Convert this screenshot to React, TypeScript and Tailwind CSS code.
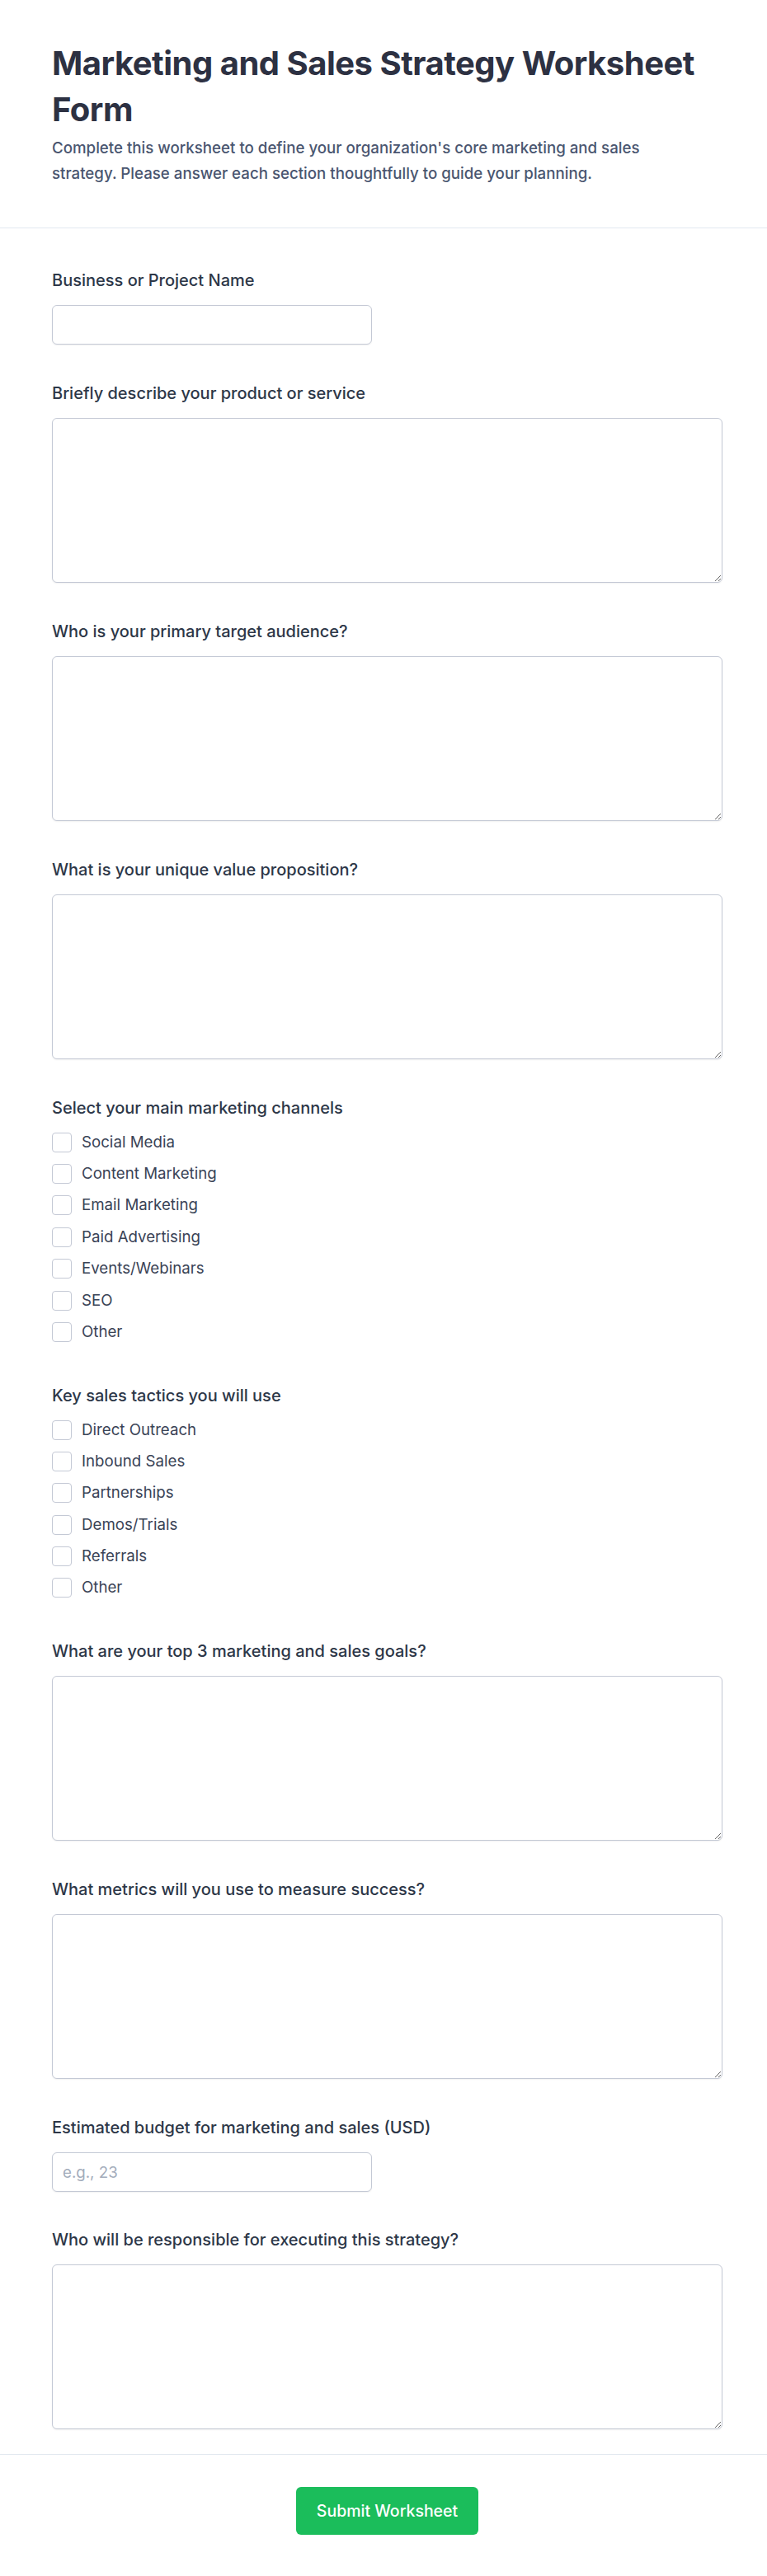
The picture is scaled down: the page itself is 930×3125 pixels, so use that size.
import { useState } from 'react'

type Field =
  | { id: string; label: string; kind: 'input'; placeholder?: string; gap?: string }
  | { id: string; label: string; kind: 'textarea'; gap?: string }
  | { id: string; label: string; kind: 'checks'; options: string[]; gap?: string }

const fields: Field[] = [
  { id: 'name', label: 'Business or Project Name', kind: 'input' },
  { id: 'product', label: 'Briefly describe your product or service', kind: 'textarea' },
  { id: 'audience', label: 'Who is your primary target audience?', kind: 'textarea' },
  { id: 'value', label: 'What is your unique value proposition?', kind: 'textarea' },
  {
    id: 'channels',
    label: 'Select your main marketing channels',
    kind: 'checks',
    options: ['Social Media', 'Content Marketing', 'Email Marketing', 'Paid Advertising', 'Events/Webinars', 'SEO', 'Other'],
  },
  {
    id: 'tactics',
    label: 'Key sales tactics you will use',
    kind: 'checks',
    options: ['Direct Outreach', 'Inbound Sales', 'Partnerships', 'Demos/Trials', 'Referrals', 'Other'],
    gap: 'mt-[51px]',
  },
  { id: 'goals', label: 'What are your top 3 marketing and sales goals?', kind: 'textarea', gap: 'mt-[51px]' },
  { id: 'metrics', label: 'What metrics will you use to measure success?', kind: 'textarea' },
  { id: 'budget', label: 'Estimated budget for marketing and sales (USD)', kind: 'input', placeholder: 'e.g., 23' },
  { id: 'owner', label: 'Who will be responsible for executing this strategy?', kind: 'textarea', gap: 'mt-[46px]' },
]

const boxClass =
  'block w-full rounded-md border border-[#c4c9d5] bg-white px-3 text-[18.7px] text-[#2d3748] shadow-[0_1px_2px_rgba(0,0,0,0.06)] outline-none placeholder:text-[#a3acbb]'

function FieldBlock({ field }: { field: Field }) {
  const [checked, setChecked] = useState<string[]>([])

  const toggle = (option: string) =>
    setChecked((list) => (list.includes(option) ? list.filter((o) => o !== option) : [...list, option]))

  return (
    <div className={field.gap ?? 'mt-[47px] first:mt-0'}>
      <label className="block text-[20px] font-medium leading-6 text-[#2d3748]" htmlFor={field.id}>
        {field.label}
      </label>
      {field.kind === 'input' ? (
        <input className={`${boxClass} mt-[18px] h-12 max-w-[388px]`} id={field.id} placeholder={field.placeholder} type="text" />
      ) : null}
      {field.kind === 'textarea' ? <textarea className={`${boxClass} mt-[18px] h-[200px] py-3`} id={field.id} /> : null}
      {field.kind === 'checks' ? (
        <div className="mt-[15.5px] flex flex-col gap-[10.4px]">
          {field.options.map((option) => (
            <label className="flex h-7 items-center gap-3 text-[18.7px] leading-7 text-[#3a4356]" key={option}>
              <input
                checked={checked.includes(option)}
                className="h-6 w-6 shrink-0 appearance-none rounded-[4px] border border-[#c4c9d5] bg-white checked:border-[#1bbd5b] checked:bg-[#1bbd5b]"
                onChange={() => toggle(option)}
                type="checkbox"
              />
              {option}
            </label>
          ))}
        </div>
      ) : null}
    </div>
  )
}

export default function App() {
  return (
    <div className="min-h-[3125px] bg-white" style={{ fontFamily: 'Inter, "Noto Sans", sans-serif' }}>
      <header className="border-b border-[#e2e8f0] pb-[50px] pt-[49px]">
        <div className="ml-[63px] w-[813px]">
          <h1 className="text-[40px] font-bold leading-[56px] tracking-[-0.5px] text-[#2d3142]">
            Marketing and Sales Strategy Worksheet Form
          </h1>
          <p className="mt-[4px] max-w-[768px] text-[18.7px] font-medium leading-[30.6px] text-[#4a5670]">
            Complete this worksheet to define your organization's core marketing and sales strategy. Please answer each
            section thoughtfully to guide your planning.
          </p>
        </div>
      </header>

      <form onSubmit={(e) => e.preventDefault()}>
        <div className="ml-[63px] w-[813px] pb-[30px] pt-[51px]">
          {fields.map((field) => (
            <FieldBlock field={field} key={field.id} />
          ))}
        </div>
        <div className="flex justify-center border-t border-[#e2e8f0] pb-[50px] pl-[63px] pr-[54px] pt-[39px]">
          <button
            className="h-[58px] rounded-md bg-[#1bbd5b] px-[25px] text-[19.5px] font-medium text-white"
            type="submit"
          >
            Submit Worksheet
          </button>
        </div>
      </form>
    </div>
  )
}
